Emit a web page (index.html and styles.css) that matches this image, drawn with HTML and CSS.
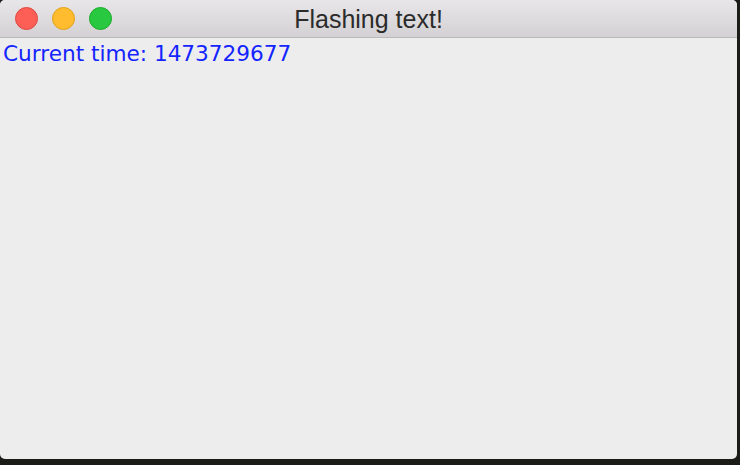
FILE: index.html
```html
<!DOCTYPE html>
<html lang="en">
<head>
    <meta charset="UTF-8">
    <title>Flashing text!</title>
    <link rel="stylesheet" href="styles.css">
</head>
<body>
    <div class="window">
        <div class="titlebar">
            <div class="lights">
                <span class="light close"></span>
                <span class="light minimize"></span>
                <span class="light zoom"></span>
            </div>
            <div class="title">Flashing text!</div>
        </div>
        <div class="content">
            <div class="time-label">Current time: 1473729677</div>
        </div>
    </div>
</body>
</html>
```

FILE: styles.css
```css
* {
    margin: 0;
    padding: 0;
    box-sizing: border-box;
}

html, body {
    width: 740px;
    height: 465px;
    background: #1b1b17;
    overflow: hidden;
}

.window {
    width: 737px;
    height: 459px;
    background: #ededed;
    border-radius: 5px;
    overflow: hidden;
    display: flex;
    flex-direction: column;
}

.titlebar {
    height: 38px;
    flex-shrink: 0;
    background: linear-gradient(#e8e6e8, #d3d1d3);
    border-bottom: 1px solid #b9b9b9;
    position: relative;
    display: flex;
    align-items: center;
}

.lights {
    display: flex;
    gap: 14px;
    padding-left: 15px;
}

.light {
    width: 23px;
    height: 23px;
    border-radius: 50%;
    display: block;
}

.light.close {
    background: #fd5f57;
    border: 1px solid #e2463f;
}

.light.minimize {
    background: #febc2e;
    border: 1px solid #e1a116;
}

.light.zoom {
    background: #28c840;
    border: 1px solid #1aab29;
}

.title {
    position: absolute;
    left: 0;
    right: 0;
    top: 1px;
    line-height: 37px;
    text-align: center;
    font-family: "Liberation Sans", Arial, sans-serif;
    font-size: 25px;
    color: #2b2b2b;
}

.content {
    flex: 1;
    padding: 2px 3px;
}

.time-label {
    font-family: "DejaVu Sans", sans-serif;
    font-size: 21.6px;
    color: #1424ff;
    line-height: 27px;
}
```
